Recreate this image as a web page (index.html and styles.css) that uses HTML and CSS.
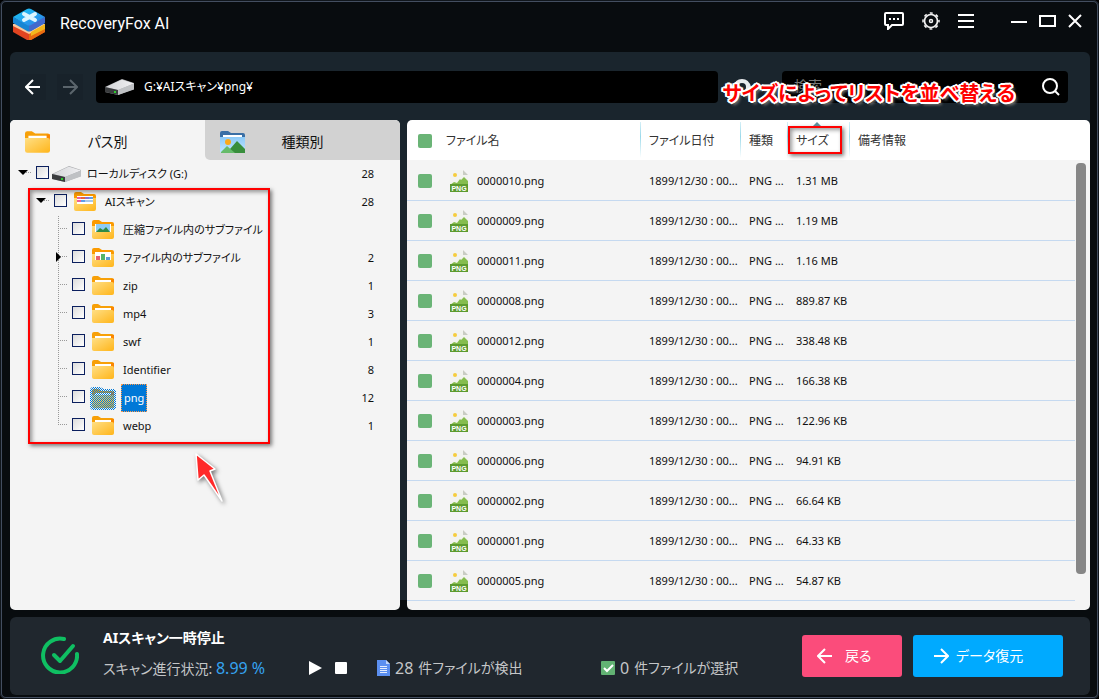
FILE: index.html
```html
<!DOCTYPE html>
<html lang="ja">
<head>
<meta charset="utf-8">
<meta name="viewport" content="width=device-width, initial-scale=1">
<title>RecoveryFox AI</title>
<link rel="stylesheet" href="styles.css">
</head>
<body>

<!-- shared icons -->
<svg class="sprite" aria-hidden="true">
  <defs>
    <linearGradient id="gFolder" x1="0" y1="0" x2="1" y2="1">
      <stop offset="0" stop-color="#ffdf85"/><stop offset="1" stop-color="#ffb51a"/>
    </linearGradient>
    <linearGradient id="gTop" x1="0" y1="0" x2="1" y2="1">
      <stop offset="0" stop-color="#19c8f5"/><stop offset="1" stop-color="#2f7fe8"/>
    </linearGradient>
    <linearGradient id="gSky" x1="0" y1="0" x2="0" y2="1">
      <stop offset="0" stop-color="#8ccaf8"/><stop offset="1" stop-color="#c2e6ff"/>
    </linearGradient>
    <linearGradient id="gDrive" x1="0" y1="0" x2="1" y2="0">
      <stop offset="0" stop-color="#d4d5d8"/><stop offset="1" stop-color="#f0f0f2"/>
    </linearGradient>
    <pattern id="pDots" width="2" height="2" patternUnits="userSpaceOnUse">
      <rect width="1" height="1" fill="#0078d7"/><rect x="1" y="1" width="1" height="1" fill="#0078d7"/>
    </pattern>
    <symbol id="folder" viewBox="0 0 22 19">
      <path d="M0 2a2 2 0 0 1 2-2h4l3 2h11a2 2 0 0 1 2 2v10H0z" fill="#f7a008"/>
      <path d="M19 3h3v5h-3z" fill="#fb8500"/>
      <path d="M3 4h16v4H3z" fill="#fff"/>
      <path d="M0 6h20a2 2 0 0 1 2 2v9a2 2 0 0 1-2 2H2a2 2 0 0 1-2-2z" fill="url(#gFolder)"/>
    </symbol>
    <symbol id="folder-open" viewBox="0 0 22 19">
      <path d="M0 2a2 2 0 0 1 2-2h5l3 2h10a2 2 0 0 1 2 2v12H0z" fill="#fb9a00"/>
      <path d="M3 4h16v10H3z" fill="#fff"/>
      <path d="M0 6h3v6h16V6h3v11a2 2 0 0 1-2 2H2a2 2 0 0 1-2-2z" fill="url(#gFolder)"/>
    </symbol>
    <symbol id="drive" viewBox="0 0 30 16">
      <path d="M0 8 17 0l12 4v6l-16 6L0 13z" fill="#a9abae"/>
      <path d="M1 8 16 1q1-.5 2 0l11 3.500L13 11z" fill="url(#gDrive)"/>
      <path d="M0 8l13 3v5L0 13z" fill="#3a3c3e"/>
      <path d="M13 11l16-6.500v6L13 16z" fill="#bfc1c4"/>
      <rect x="9" y="12" width="2" height="2" fill="#2ecc2e"/>
    </symbol>
    <symbol id="png" viewBox="0 0 18 22">
      <path d="M0 0h12l6 6v15H0z" fill="#f2f3ef"/>
      <path d="M13 0l5 5h-5z" fill="#c9ccc3"/>
      <circle cx="5" cy="5" r="2" fill="#f6cd3c"/>
      <path d="M0 15l4-3 3 1 3-4 1 1 3-3 4 4v5H0z" fill="#85bd4d"/>
      <rect y="14" width="18" height="8" fill="#5c9a2e"/>
      <text x="9" y="21" text-anchor="middle" class="png-label">PNG</text>
    </symbol>
    <symbol id="arrow" viewBox="0 0 16 16">
      <path d="M1 8h14M8 1l7 7-7 7" fill="none" stroke="currentColor" stroke-width="2"/>
    </symbol>
  </defs>
</svg>

<div class="window">
  <header class="titlebar">
    <svg class="logo" viewBox="0 0 32 32">
      <path d="M0 17l16 8 16-8v7l-14 8q-2 1-4 0L0 24z" fill="#e04420"/>
      <path d="M16 25l16-8v7l-14 8h-2z" fill="#e86c10"/>
      <path d="M0 18l16 8 16-8v-2H0z" fill="#fac79c"/>
      <path d="M18 24l14-8v5l-14 7z" fill="#f3b71d"/>
      <path d="M0 9l16 8 16-8v6L18 23q-2 1-4 0L0 15z" fill="#1785d3"/>
      <path d="M16 17l16-8v6l-14 8h-2z" fill="#4269cc"/>
      <path d="M0 9 14 1q2-1 4 0l14 8-14 8q-2 1-4 0z" fill="url(#gTop)"/>
      <path d="M11 6l11 6M22 6l-11 6" stroke="#dcf5ff" stroke-width="4" stroke-linecap="round"/>
    </svg>
    <h1 class="app-name">RecoveryFox AI</h1>
    <div class="tools">
      <button type="button" class="icon-button" aria-label="フィードバック">
        <svg width="20" height="18" viewBox="0 0 20 18" fill="none" stroke="#fff" stroke-width="2"><path d="M2 1h16q1 0 1 1v10q0 1-1 1H8l-4 4v-4H2q-1 0-1-1V2q0-1 1-1z"/><path d="M5 7h2m2 0h2m2 0h2"/></svg>
      </button>
      <button type="button" class="icon-button" aria-label="設定">
        <svg width="18" height="18" viewBox="0 0 18 18" fill="none" stroke="#f2f2f2"><circle cx="9" cy="9" r="6.500" stroke-width="1.700"/><circle cx="9" cy="9" r="8" stroke-width="1.500" stroke-dasharray="3 3.283" stroke-dashoffset="1.500"/><circle cx="9" cy="9" r="1.500" stroke-width="1.500"/></svg>
      </button>
      <button type="button" class="icon-button" aria-label="メニュー">
        <svg width="16" height="16" viewBox="0 0 16 16" fill="#fff"><path d="M0 1h16v2H0zM0 7h16v2H0zM0 13h16v2H0z"/></svg>
      </button>
    </div>
    <div class="window-controls">
      <button type="button" class="icon-button" aria-label="最小化">
        <svg width="16" height="14" viewBox="0 0 16 14" stroke="#fff" stroke-width="2"><path d="M0 8h16"/></svg>
      </button>
      <button type="button" class="icon-button" aria-label="最大化">
        <svg width="17" height="12" viewBox="0 0 17 12" fill="none" stroke="#fff" stroke-width="2"><path d="M1 1h15v10H1z"/></svg>
      </button>
      <button type="button" class="icon-button" aria-label="閉じる">
        <svg width="14" height="14" viewBox="0 0 14 14" stroke="#fff" stroke-width="2"><path d="M1 1l12 12M13 1L1 13"/></svg>
      </button>
    </div>
  </header>

  <main class="content">
    <div class="toolbar">
      <button type="button" class="icon-button nav" aria-label="前へ">
        <svg class="flip" width="16" height="16"><use href="#arrow"/></svg>
      </button>
      <button type="button" class="icon-button nav" aria-label="次へ" disabled>
        <svg width="16" height="16"><use href="#arrow"/></svg>
      </button>
      <label class="address">
        <svg width="30" height="16"><use href="#drive"/></svg>
        <input type="text" value="G:¥AIスキャン¥png¥" aria-label="パス">
      </label>
      <button type="button" class="icon-button filter" aria-label="フィルター">
        <svg width="20" height="18" viewBox="0 0 20 18"><path d="M1 9q2-8 9-8t9 8q-2 8-9 8T1 9z" fill="#e9ecee"/><circle cx="10" cy="9" r="4" fill="#1a252d"/></svg>
      </button>
      <div class="search">
        <input type="search" placeholder="検索" aria-label="検索">
        <button type="button" class="icon-button" aria-label="検索する">
          <svg width="18" height="18" viewBox="0 0 18 18" fill="none" stroke="#fff" stroke-width="2"><circle cx="8" cy="8" r="7"/><path d="M13 13l4 4"/></svg>
        </button>
      </div>
      <p class="callout-text">サイズによってリストを並べ替える</p>
    </div>

    <div class="panels">
      <section class="sidebar">
        <div class="tabs">
          <button type="button" class="tab active">
            <svg width="25" height="22"><use href="#folder"/></svg>
            <span>パス別</span>
          </button>
          <button type="button" class="tab">
            <svg width="25" height="22" viewBox="0 0 25 22"><path d="M0 2q0-2 2-2h6l3 2h12q2 0 2 2v9H0z" fill="#3a6fa5"/><path d="M3 4h19v3H3z" fill="#fff"/><path d="M0 6h25v14q0 2-2 2H2q-2 0-2-2z" fill="url(#gSky)"/><circle cx="8" cy="11" r="3" fill="#fba919"/><path d="M10 22v-4l7-8 8 8v4z" fill="#388e3c"/><path d="M1 22v-1l6-6 8 7z" fill="#66bb6a"/></svg>
            <span>種類別</span>
          </button>
        </div>

        <ul class="tree">
          <li>
            <div class="node level-0">
              <span class="twig open"></span>
              <input type="checkbox" id="n0">
              <svg class="node-icon" width="30" height="16"><use href="#drive"/></svg>
              <label for="n0">ローカルディスク (G:)</label>
              <span class="count">28</span>
            </div>
          </li>
          <li>
            <div class="node level-1">
              <span class="twig open"></span>
              <input type="checkbox" id="n1">
              <svg class="node-icon" width="22" height="19" viewBox="0 0 22 19"><use href="#folder-open"/><path d="M3 5h4v2H3zM3 8h4v2H3z" fill="#ec5f9b"/><path d="M7 5h4v2H7z" fill="#e4663c"/><path d="M11 5h4v2h-4z" fill="#8b6fd0"/><path d="M15 5h4v2h-4zM7 8h4v2H7z" fill="#5f9ee8"/><path d="M11 8h8v2h-8z" fill="#a7c7ea"/></svg>
              <label for="n1">AIスキャン</label>
              <span class="count">28</span>
            </div>
            <ul class="branch">
              <li class="node level-2">
                <span class="twig"></span>
                <input type="checkbox" id="n2">
                <svg class="node-icon" width="22" height="19" viewBox="0 0 22 19"><use href="#folder-open"/><path d="M4 4h14v8H4z" fill="#8dcbf5"/><path d="M4 12l4-4 3 2 3-3 4 5z" fill="#2f8b46"/></svg>
                <label for="n2">圧縮ファイル内のサブファイル</label>
              </li>
              <li class="node level-2">
                <span class="twig closed"></span>
                <input type="checkbox" id="n3">
                <svg class="node-icon" width="22" height="19" viewBox="0 0 22 19"><use href="#folder-open"/><path d="M4 8h4v4H4z" fill="#e5626c"/><path d="M9 6h4v6H9z" fill="#55b56a"/><path d="M14 9h4v3h-4z" fill="#5b9bd5"/></svg>
                <label for="n3">ファイル内のサブファイル</label>
                <span class="count">2</span>
              </li>
              <li class="node level-2">
                <span class="twig"></span>
                <input type="checkbox" id="n4">
                <svg class="node-icon" width="22" height="19"><use href="#folder"/></svg>
                <label for="n4">zip</label>
                <span class="count">1</span>
              </li>
              <li class="node level-2">
                <span class="twig"></span>
                <input type="checkbox" id="n5">
                <svg class="node-icon" width="22" height="19"><use href="#folder"/></svg>
                <label for="n5">mp4</label>
                <span class="count">3</span>
              </li>
              <li class="node level-2">
                <span class="twig"></span>
                <input type="checkbox" id="n6">
                <svg class="node-icon" width="22" height="19"><use href="#folder"/></svg>
                <label for="n6">swf</label>
                <span class="count">1</span>
              </li>
              <li class="node level-2">
                <span class="twig"></span>
                <input type="checkbox" id="n7">
                <svg class="node-icon" width="22" height="19"><use href="#folder"/></svg>
                <label for="n7">Identifier</label>
                <span class="count">8</span>
              </li>
              <li class="node level-2 selected">
                <span class="twig"></span>
                <input type="checkbox" id="n8">
                <svg class="node-icon" width="26" height="24" viewBox="0 0 26 24"><use href="#folder" x="2" y="3" width="22" height="19"/><path d="M2 1h8l4 2h10l2 2v17l-2 2H2l-2-2V3z" fill="url(#pDots)"/></svg>
                <label for="n8">png</label>
                <span class="count">12</span>
              </li>
              <li class="node level-2 last">
                <span class="twig"></span>
                <input type="checkbox" id="n9">
                <svg class="node-icon" width="22" height="19"><use href="#folder"/></svg>
                <label for="n9">webp</label>
                <span class="count">1</span>
              </li>
            </ul>
            <div class="marker marker-tree"></div>
            <svg class="pointer" width="32" height="52" viewBox="0 0 32 52"><path d="M2 1l19 15-5 2 12 30L10 22l-6 5z" fill="#ff2a2a" stroke="#fff" stroke-width="1.500" stroke-linejoin="round"/></svg>
          </li>
        </ul>
      </section>

      <section class="files">
        <table class="file-table">
          <colgroup>
            <col class="col-check"><col class="col-name"><col class="col-date"><col class="col-type"><col class="col-size"><col>
          </colgroup>
          <thead>
            <tr>
              <th class="check"><input type="checkbox" aria-label="すべて選択"></th>
              <th>ファイル名</th>
              <th class="split">ファイル日付</th>
              <th class="split">種類</th>
              <th class="split sorted">サイズ<span class="marker marker-size"></span></th>
              <th class="split">備考情報</th>
            </tr>
          </thead>
          <tbody id="fileRows"></tbody>
        </table>
        <div class="scrollbar"><div class="thumb"></div></div>
      </section>
    </div>
  </main>

  <footer class="status">
    <svg class="done" width="38" height="38" viewBox="0 0 38 38" fill="none" stroke="#0fbf62" stroke-width="4" stroke-linecap="round" stroke-linejoin="round"><path d="M23 3a17 17 0 1 0 13 15"/><path d="M13 19l6 6L32 10"/></svg>
    <div class="scan">
      <h2>AIスキャン一時停止</h2>
      <div class="scan-row">
        <p class="progress">スキャン進行状況: <span>8.99 %</span></p>
        <button type="button" class="icon-button play" aria-label="再開">
          <svg width="13" height="14" viewBox="0 0 13 14"><path d="M0 0l13 7-13 7z" fill="#fff"/></svg>
        </button>
        <button type="button" class="icon-button" aria-label="停止">
          <svg width="12" height="12"><rect width="12" height="12" rx="1" fill="#fff"/></svg>
        </button>
        <p class="found">
          <svg width="13" height="16" viewBox="0 0 13 16"><path d="M0 0h9l4 4v12H0z" fill="#5b8ff0"/><path d="M9 0l4 4H9z" fill="#c3d7fb"/><path d="M3 6.500h7M3 8.500h7M3 10.500h7M3 12.500h7" stroke="#e4edff"/></svg>
          <span class="number">28</span> 件ファイルが検出
        </p>
        <p class="chosen">
          <svg width="14" height="14" viewBox="0 0 14 14"><rect width="14" height="14" rx="1" fill="#62b273"/><path d="M3 7l3 3 6-6" fill="none" stroke="#fff" stroke-width="2"/></svg>
          <span class="number">0</span> 件ファイルが選択
        </p>
      </div>
    </div>
    <button type="button" class="action back"><svg class="flip" width="16" height="16"><use href="#arrow"/></svg>戻る</button>
    <button type="button" class="action recover"><svg width="16" height="16"><use href="#arrow"/></svg>データ復元</button>
  </footer>
</div>

<script src="files.js"></script>
</body>
</html>
```

FILE: styles.css
```css
* {
  box-sizing: border-box;
}
body {
  margin: 0;
  background: #000;
  color: #111;
  font-family: "Noto Sans", "Noto Sans CJK JP", sans-serif;
  font-size: 11px;
  line-height: 16px;
  font-feature-settings: "palt";
}
h1, h2, p, ul {
  margin: 0;
  padding: 0;
}
ul {
  list-style: none;
}
button, input {
  font: inherit;
  font-feature-settings: inherit;
}
svg {
  display: block;
  flex: none;
}
.sprite {
  position: absolute;
  width: 0;
  height: 0;
}
.png-label {
  font: bold 7px "Liberation Sans", sans-serif;
  fill: #fff;
}
.flip {
  transform: scaleX(-1);
}

/* window frame */
.window {
  display: flex;
  flex-direction: column;
  height: 100vh;
  border: 2px solid #434e60;
  outline: 1px solid #10161c;
  outline-offset: -1px;
  border-radius: 6px;
  background: #080c0f;
  padding: 2px 7px 2px 8px;
}
.icon-button {
  display: flex;
  align-items: center;
  justify-content: center;
  padding: 0;
  border: 0;
  background: none;
  color: #fff;
  cursor: pointer;
}
.titlebar {
  display: flex;
  align-items: center;
  flex: none;
  height: 48px;
  padding: 0 8px 8px 3px;
}
.logo {
  width: 32px;
  height: 32px;
}
.app-name {
  margin-left: 15px;
  color: #fff;
  font: 16px/24px Roboto, sans-serif;
}
.tools, .window-controls {
  display: flex;
  align-items: center;
  padding-bottom: 7px;
}
.tools {
  gap: 18px;
  margin-left: auto;
}
.window-controls {
  gap: 12px;
  margin-left: 37px;
}

/* main area */
.content {
  display: flex;
  flex-direction: column;
  flex: 1;
  min-height: 0;
  border-radius: 6px 6px 0 0;
  background: linear-gradient(#1a252d calc(100% - 10px), #080c0f calc(100% - 10px));
}
.toolbar {
  position: relative;
  display: flex;
  align-items: center;
  flex: none;
  height: 68px;
  padding: 2px 22px 0 10px;
}
.nav {
  width: 26px;
  height: 26px;
  margin-right: 11px;
  background: #18222a;
}
.nav:disabled {
  color: #5b656c;
}
.address, .search {
  display: flex;
  align-items: center;
  height: 32px;
  border-radius: 4px;
  background: #000;
}
.address {
  flex: 1;
  margin-left: 2px;
  padding-left: 9px;
  gap: 9px;
}
.address input, .search input {
  flex: 1;
  min-width: 0;
  padding: 0;
  border: 0;
  outline: 0;
  background: none;
  color: #fff;
  font-size: 12px;
}
.filter {
  width: 28px;
  margin: 0 26px 0 10px;
}
.search {
  width: 286px;
  padding: 0 8px 0 12px;
}
.search input::placeholder {
  color: #777;
  font-size: 14px;
}
.callout-text {
  position: absolute;
  top: 30px;
  right: 75px;
  color: #f00;
  font-size: 20px;
  font-weight: bold;
  line-height: 24px;
  white-space: nowrap;
  text-shadow: 2px 0 #fff, -2px 0 #fff, 0 2px #fff, 0 -2px #fff,
    1px 1px #fff, -1px 1px #fff, 1px -1px #fff, -1px -1px #fff,
    2px 1px #fff, -2px 1px #fff, 2px -1px #fff, -2px -1px #fff,
    3px 3px 3px #777;
}
.panels {
  display: flex;
  flex: 1;
  gap: 7px;
  min-height: 0;
}

/* folder tree */
.sidebar {
  flex: 0 0 390px;
  overflow: hidden;
  border-radius: 5px;
  background: #f4f4f4;
}
.tabs {
  display: flex;
  height: 40px;
}
.tab {
  display: grid;
  grid-template-columns: 25px 1fr 25px;
  align-items: center;
  flex: 1;
  padding: 4px 15px 0;
  border: 0;
  background: #d2d2d2;
  color: #111;
  font-size: 14px;
  border-radius: 0 0 0 5px;
}
.tab.active {
  background: #f4f4f4;
}
.tree > li {
  position: relative;
}
.node {
  display: flex;
  align-items: center;
  height: 28px;
  padding-right: 26px;
}
.level-0 { padding-left: 8px; }
.level-1 { padding-left: 26px; }
.level-2 { padding-left: 44px; }
.twig {
  position: relative;
  width: 18px;
  height: 28px;
  background: repeating-linear-gradient(90deg, #999 0 1px, transparent 1px 2px) 4px 12px / 10px 1px no-repeat;
}
.level-2 .twig {
  background:
    repeating-linear-gradient(90deg, #999 0 1px, transparent 1px 2px) 4px 12px / 10px 1px no-repeat,
    repeating-linear-gradient(#999 0 1px, transparent 1px 2px) 4px 0 / 1px 28px no-repeat;
}
.level-2.last .twig {
  background-size: 10px 1px, 1px 13px;
}
.twig.open::before, .twig.closed::before {
  content: "";
  position: absolute;
  top: 10px;
  left: 0;
  border: 5px solid transparent;
  border-top-color: #000;
  border-bottom-width: 0;
}
.twig.closed::before {
  top: 8px;
  left: 2px;
  border: 5px solid transparent;
  border-left-color: #000;
  border-right-width: 0;
}
.node input {
  appearance: none;
  flex: none;
  width: 13px;
  height: 13px;
  margin: 0 0 3px;
  border: 1px solid #0b1f5e;
  background: linear-gradient(135deg, #dcdcdc, #fff);
}
.node input:checked {
  background: #0b1f5e;
}
.node-icon {
  margin: 0 7px 1px;
}
.level-0 .node-icon {
  margin: 0 3px;
}
.selected .node-icon {
  margin: 0 5px;
}
.node label {
  padding: 0 2px;
}
.node.selected label {
  border: 1px dotted #ff9a4a;
  padding: 5px 2px;
  background: #0078d7;
  color: #fff;
}
.count {
  margin-left: auto;
}
.marker {
  position: absolute;
  border: 2px solid #f00;
  box-shadow: 2px 2px 4px rgba(0, 0, 0, .5), inset 2px 2px 4px rgba(0, 0, 0, .4);
  pointer-events: none;
}
.marker-tree {
  top: 0;
  left: 18px;
  width: 242px;
  height: 256px;
}
.pointer {
  position: absolute;
  top: 265px;
  left: 184px;
  filter: drop-shadow(2px 2px 2px rgba(0, 0, 0, .5));
}

/* file list */
.files {
  display: flex;
  flex: 1;
  min-width: 0;
  overflow: hidden;
  border-radius: 5px;
  background: linear-gradient(#fff 40px, #f4f4f4 40px);
}
.file-table {
  flex: 1;
  align-self: flex-start;
  min-width: 0;
  table-layout: fixed;
  border-spacing: 0;
}
.col-check { width: 30px; }
.col-name { width: 203px; }
.col-date { width: 100px; }
.col-type { width: 47px; }
.col-size { width: 62px; }
.file-table th, .file-table td {
  height: 40px;
  padding: 0 0 0 9px;
  overflow: hidden;
  text-align: left;
  text-overflow: ellipsis;
  white-space: nowrap;
}
.file-table th {
  position: relative;
  height: 41px;
  overflow: visible;
  color: #333;
  font-size: 12px;
  font-weight: normal;
}
.file-table td {
  border-bottom: 1px solid #c5d9f0;
}
.file-table .split {
  background: linear-gradient(#d5eff7, #9bd9ea 40%, #fff) 0 2px / 1px 36px no-repeat;
}
.file-table .check {
  padding-left: 11px;
}
.check input {
  appearance: none;
  display: block;
  width: 14px;
  height: 14px;
  margin: 0;
  border-radius: 2px;
  background: #6ab476;
}
.file-name {
  display: flex;
  align-items: center;
  gap: 9px;
  padding-left: 4px;
}
.sorted::after {
  content: "";
  position: absolute;
  top: 2px;
  left: 26px;
  border: 4px solid transparent;
  border-top-width: 0;
  border-bottom-color: #5b8f9b;
}
.marker-size {
  top: 6px;
  left: 1px;
  width: 54px;
  height: 28px;
}
.scrollbar {
  flex: 0 0 15px;
  padding: 43px 4px 0 1px;
}
.thumb {
  height: 92%;
  border-radius: 4px;
  background: #868686;
}

/* status bar */
.status {
  display: flex;
  align-items: center;
  flex: none;
  height: 78px;
  margin-top: 7px;
  padding: 0 27px 0 31px;
  border-radius: 6px;
  background: #20272e;
  color: #c4c6c8;
  font-size: 14px;
}
.done {
  margin-bottom: 3px;
}
.scan {
  flex: 1;
  margin-left: 24px;
  padding-bottom: 6px;
}
.scan h2 {
  color: #fff;
  font-size: 14px;
  line-height: 20px;
}
.scan-row {
  display: flex;
  align-items: center;
  height: 20px;
  margin-top: 10px;
  white-space: nowrap;
}
.progress {
  width: 206px;
}
.progress span {
  color: #35a3f0;
  font-size: 16px;
}
.play {
  margin-right: 13px;
}
.found, .chosen {
  display: flex;
  align-items: center;
  gap: 5px;
}
.found {
  width: 224px;
  margin-left: 30px;
}
.number {
  font-size: 16px;
}
.action {
  display: flex;
  align-items: center;
  gap: 12px;
  width: 100px;
  height: 42px;
  padding: 0 15px;
  border: 0;
  border-radius: 3px;
  background: #fb4c7b;
  color: #fff;
  cursor: pointer;
}
.recover {
  gap: 7px;
  width: 150px;
  margin-left: 11px;
  padding: 0 20px;
  background: #00aaff;
}
```

FILE: files.js
```js
const files = [
  ['0000010.png', '1.31 MB'],
  ['0000009.png', '1.19 MB'],
  ['0000011.png', '1.16 MB'],
  ['0000008.png', '889.87 KB'],
  ['0000012.png', '338.48 KB'],
  ['0000004.png', '166.38 KB'],
  ['0000003.png', '122.96 KB'],
  ['0000006.png', '94.91 KB'],
  ['0000002.png', '66.64 KB'],
  ['0000001.png', '64.33 KB'],
  ['0000005.png', '54.87 KB']
];

document.getElementById('fileRows').innerHTML = files.map(([name, size]) => `
  <tr>
    <td class="check"><input type="checkbox" aria-label="${name}"></td>
    <td><div class="file-name"><svg width="18" height="22"><use href="#png"/></svg>${name}</div></td>
    <td>1899/12/30 : 00...</td>
    <td>PNG ...</td>
    <td>${size}</td>
    <td></td>
  </tr>`).join('');
```
